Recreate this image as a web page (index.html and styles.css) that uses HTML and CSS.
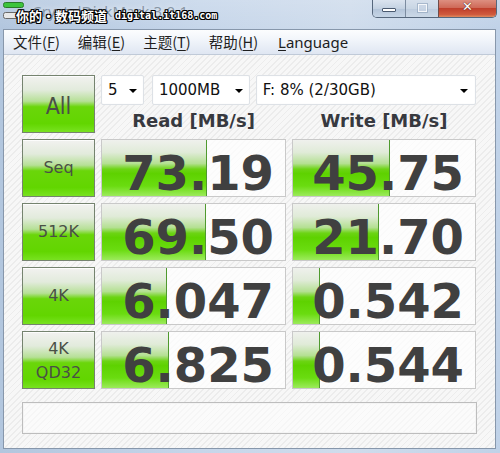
FILE: index.html
```html
<!DOCTYPE html>
<html lang="zh-CN">
<head>
<meta charset="utf-8">
<title>CrystalDiskMark 3.0.1</title>
<link rel="stylesheet" href="styles.css">
</head>
<body>
<div class="window">
  <div class="titlebar">
    <svg class="appicon" width="21" height="18" viewBox="0 0 21 18">
      <rect x="0.5" y="0.5" width="20" height="5" rx="2" fill="#3cc43c" stroke="#2a7a2a"/>
      <rect x="0.5" y="10.5" width="20" height="6" rx="2" fill="#e8e8e8" stroke="#6a6a6a"/>
    </svg>
    <div class="title">CrystalDiskMark 3.0.1</div>
    <div class="watermark"><span class="wm-cn">你的·数码频道</span><span class="wm-en">digital.it168.com</span></div>
    <div class="caption">
      <div class="cb cb-min"><span class="dash"></span></div>
      <div class="cb cb-max"><span class="sq"></span></div>
      <div class="cb cb-close"><span class="x">✕</span></div>
    </div>
  </div>
  <div class="client">
    <div class="menubar">
      <span class="mi">文件(<u>F</u>)</span>
      <span class="mi">编辑(<u>E</u>)</span>
      <span class="mi">主题(<u>T</u>)</span>
      <span class="mi">帮助(<u>H</u>)</span>
      <span class="mi mi-en"><u>L</u>anguage</span>
    </div>
    <div class="content">
      <div class="bench">
        <div class="btn btn-all">All</div>
        <div class="controls">
          <div class="selects">
            <div class="sel sel-n"><span>5</span><i class="arrow"></i></div>
            <div class="sel sel-size"><span>1000MB</span><i class="arrow"></i></div>
            <div class="sel sel-drive"><span>F: 8% (2/30GB)</span><i class="arrow"></i></div>
          </div>
          <div class="heads">
            <div class="head">Read [MB/s]</div>
            <div class="head">Write [MB/s]</div>
          </div>
        </div>

        <div class="btn">Seq</div>
        <div class="cell"><div class="bar" style="width:105px"></div><div class="num">73.19</div></div>
        <div class="cell"><div class="bar" style="width:97px"></div><div class="num">45.75</div></div>

        <div class="btn">512K</div>
        <div class="cell"><div class="bar" style="width:104px"></div><div class="num">69.50</div></div>
        <div class="cell"><div class="bar" style="width:86px"></div><div class="num">21.70</div></div>

        <div class="btn">4K</div>
        <div class="cell"><div class="bar" style="width:65px"></div><div class="num">6.047</div></div>
        <div class="cell"><div class="bar" style="width:27px"></div><div class="num">0.542</div></div>

        <div class="btn btn-two">4K<br>QD32</div>
        <div class="cell"><div class="bar" style="width:67px"></div><div class="num">6.825</div></div>
        <div class="cell"><div class="bar" style="width:27px"></div><div class="num">0.544</div></div>
      </div>
      <div class="status"></div>
    </div>
  </div>
</div>
</body>
</html>
```

FILE: styles.css
```css
* { box-sizing: border-box; }
html, body { margin: 0; padding: 0; }
body {
  width: 500px;
  height: 453px;
  overflow: hidden;
  font-family: "DejaVu Sans", sans-serif;
  background: #b9cce2;
}
.window {
  width: 500px;
  height: 453px;
  display: flex;
  flex-direction: column;
  background: linear-gradient(to right, #b2c6de 0%, #c6d6ea 40%, #cfdcec 70%, #c0d2e8 100%);
}
.titlebar {
  position: relative;
  height: 29px;
  display: flex;
  align-items: flex-start;
  padding-left: 3px;
  background: linear-gradient(to bottom, rgba(255,255,255,0.15), rgba(255,255,255,0));
}
.appicon { margin-top: 2px; flex: none; }
.title {
  margin-left: 8px;
  margin-top: 2px;
  font-family: "Noto Sans", sans-serif;
  font-size: 15px;
  line-height: 18px;
  color: rgba(70, 85, 100, 0.55);
  text-shadow: 0 0 6px rgba(255,255,255,0.9);
  letter-spacing: 0.2px;
}
.watermark {
  position: absolute;
  left: 16px;
  top: 7px;
  display: flex;
  align-items: center;
  gap: 8px;
  color: #fff;
  text-shadow: -1px 0 0 #000, 1px 0 0 #000, 0 -1px 0 #000, 0 1px 0 #000,
               -1px -1px 0 #000, 1px 1px 0 #000, -1px 1px 0 #000, 1px -1px 0 #000;
  white-space: nowrap;
}
.wm-cn { font-family: "Noto Sans CJK SC", sans-serif; font-size: 13px; line-height: 17px; font-weight: 700; }
.wm-en { font-family: "DejaVu Sans Mono", monospace; font-size: 10px; line-height: 17px; font-weight: 700; }
.caption {
  margin-left: auto;
  margin-right: 3px;
  display: flex;
  height: 18px;
  border: 1px solid #56677c;
  border-top: none;
  border-radius: 0 0 5px 5px;
  overflow: hidden;
}
.cb {
  height: 100%;
  display: flex;
  align-items: center;
  justify-content: center;
}
.cb-min {
  width: 33px;
  background: linear-gradient(to bottom, #dbe4ef 0%, #c4d2e2 50%, #b2c3d8 51%, #c6d5e6 100%);
  border-right: 1px solid #7c8ca0;
}
.cb-max {
  width: 33px;
  background: linear-gradient(to bottom, #d6e0ec 0%, #c9d6e4 50%, #bccbdd 51%, #cbd8e7 100%);
  border-right: 1px solid #6e4d4a;
}
.cb-close {
  width: 57px;
  background: linear-gradient(to bottom, #dd8f80 0%, #cf6a58 45%, #c0402c 50%, #cf5a3e 85%, #e08a5e 100%);
}
.dash {
  display: block;
  width: 14px;
  height: 4px;
  margin-top: 2px;
  background: #fff;
  border: 1px solid #4a5a70;
  border-radius: 1px;
}
.sq {
  display: block;
  width: 9px;
  height: 8px;
  margin-top: -2px;
  border: 1px solid rgba(255,255,255,0.8);
  box-shadow: 0 0 0 1px rgba(140,160,185,0.6);
  background: rgba(200,212,228,0.6);
}
.x {
  color: #fff;
  font-size: 13px;
  font-weight: 700;
  line-height: 13px;
  margin-top: -4px;
  text-shadow: 0 0 1px #5a1d14, 0 0 1px #5a1d14;
}
.client {
  flex: 1;
  margin: 0 4px 4px 3px;
  border: 1px solid #8797ab;
  display: flex;
  flex-direction: column;
  background-color: #f6f6f6;
  background-image: repeating-linear-gradient(135deg, #f7f7f7 0px, #f7f7f7 3px, #ececec 3px, #ececec 4.3px);
}
.menubar {
  height: 25px;
  display: flex;
  align-items: center;
  padding-left: 0;
  background: linear-gradient(to bottom, #fcfdfe 0%, #f0f4fa 45%, #dfe6f2 100%);
  border-bottom: 1px solid #c0cad8;
  font-family: "Noto Sans CJK SC", sans-serif;
  font-size: 14.5px;
  color: #1e1e1e;
}
.mi { padding: 0 9px; line-height: 20px; }
.mi u { text-underline-offset: 2px; }
.mi-en { font-family: "Noto Sans", sans-serif; font-size: 15px; padding-left: 11px; }
.content {
  flex: 1;
  padding: 20px 0 0 18px;
}
.bench {
  display: grid;
  grid-template-columns: 73px 185px 184px;
  grid-template-rows: repeat(5, 58px);
  column-gap: 6px;
  row-gap: 6px;
}
.btn {
  border: 1px solid #75836f;
  box-shadow: inset 0 1px 0 rgba(255,255,255,0.8);
  background: linear-gradient(to bottom, #f2f2f0 0%, #e2ebdc 25%, #b6e096 45%, #6ad60a 55%, #62d600 85%, #78e220 100%);
  display: flex;
  align-items: center;
  justify-content: center;
  text-align: center;
  color: #4a5046;
  font-family: "DejaVu Sans", sans-serif;
  font-size: 16px;
  line-height: 24px;
}
.btn-all {
  font-family: "DejaVu Sans Condensed", "DejaVu Sans", sans-serif;
  font-size: 23px;
  padding-top: 4px;
}
.btn-two { line-height: 24px; padding-top: 2px; }
.controls {
  grid-column: 2 / 4;
  display: flex;
  flex-direction: column;
}
.selects {
  height: 30px;
  display: flex;
}
.sel {
  height: 30px;
  display: flex;
  align-items: center;
  justify-content: space-between;
  padding: 0 6px 0 6px;
  background: #fff;
  border: 1px solid #dde1e6;
  border-radius: 2px;
  box-shadow: inset 0 0 0 1px #fdfdfd;
  font-family: "DejaVu Sans", sans-serif;
  font-size: 15px;
  color: #111;
}
.sel-n { width: 43px; }
.sel-size { width: 98px; margin-left: 8px; }
.sel-drive { width: 221px; margin-left: 6px; padding-right: 7px; }
.arrow {
  display: block;
  width: 0;
  height: 0;
  border-left: 4px solid transparent;
  border-right: 4px solid transparent;
  border-top: 4px solid #000;
  margin-top: 1px;
}
.heads {
  display: grid;
  grid-template-columns: 185px 184px;
  column-gap: 6px;
  padding-top: 5px;
}
.head {
  text-align: center;
  font-family: "DejaVu Sans", sans-serif;
  font-weight: 700;
  font-size: 18px;
  line-height: 22px;
  color: #37393f;
}
.cell {
  border: 1px solid #c9c9c9;
  background: rgba(255,255,255,0.72);
  display: grid;
}
.cell > * { grid-area: 1 / 1; }
.bar {
  justify-self: start;
  height: 100%;
  border-right: 1px solid #4f9a2e;
  background: linear-gradient(to bottom, #eff1ed 0%, #e0ebd8 22%, #b4e092 42%, #6cd414 52%, #5ed200 60%, #6adc10 82%, #9ceb5c 100%);
}
.num {
  justify-self: end;
  position: relative;
  padding-right: 11px;
  padding-top: 11px;
  font-family: "DejaVu Sans", sans-serif;
  font-weight: 700;
  font-size: 48px;
  line-height: 45px;
  color: #404040;
}
.status {
  margin-top: 13px;
  width: 455px;
  height: 32px;
  border: 1px solid #bdbdbd;
  box-shadow: inset 0 0 0 1px #f4f4f4;
  background: rgba(255,255,255,0.55);
}
```
